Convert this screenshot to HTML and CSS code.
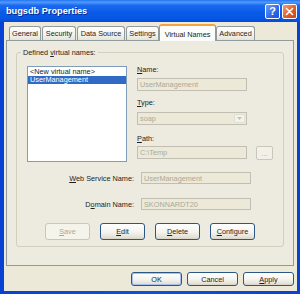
FILE: index.html
```html
<!DOCTYPE html>
<html lang="en">
<head>
    <meta charset="UTF-8">
    <title>bugsdb Properties</title>
    <link rel="stylesheet" href="styles.css">
</head>
<body>
    <div class="window">
        <!-- Title bar -->
        <div class="titlebar">
            <span class="title">bugsdb Properties</span>
            <div class="caption-buttons">
                <span class="cap-btn help">?</span>
                <span class="cap-btn close">
                    <svg width="9" height="9" viewBox="0 0 9 9">
                        <path d="M1.5 1.5 L7.5 7.5 M7.5 1.5 L1.5 7.5" stroke="#fff" stroke-width="1.6" stroke-linecap="round"/>
                    </svg>
                </span>
            </div>
        </div>

        <div class="client">
            <!-- Tabs -->
            <div class="tabs">
                <div class="tab tab-general">General</div>
                <div class="tab tab-security">Security</div>
                <div class="tab tab-source">Data Source</div>
                <div class="tab tab-settings">Settings</div>
                <div class="tab tab-virtual active">Virtual Names</div>
                <div class="tab tab-advanced">Advanced</div>
            </div>

            <div class="panel">
                <fieldset class="group">
                    <legend>Defined <u>v</u>irtual names:</legend>

                    <div class="group-top">
                        <div class="listbox">
                            <div class="list-item">&lt;New virtual name&gt;</div>
                            <div class="list-item selected">UserManagement</div>
                        </div>

                        <div class="fields">
                            <div class="field-label"><u>N</u>ame:</div>
                            <div class="textbox wide">UserManagement</div>

                            <div class="field-label type-label"><u>T</u>ype:</div>
                            <div class="combo">
                                <span class="combo-text">soap</span>
                                <span class="combo-arrow">
                                    <svg width="5" height="3" viewBox="0 0 5 3"><path d="M0 0 L5 0 L2.5 3 Z" fill="#C4C2B6"/></svg>
                                </span>
                            </div>

                            <div class="field-label path-label"><u>P</u>ath:</div>
                            <div class="path-row">
                                <div class="textbox wide">C:\Temp</div>
                                <div class="btn browse">...</div>
                            </div>
                        </div>
                    </div>

                    <div class="row web-row">
                        <div class="row-label"><u>W</u>eb Service Name:</div>
                        <div class="textbox short">UserManagement</div>
                    </div>
                    <div class="row domain-row">
                        <div class="row-label">D<u>o</u>main Name:</div>
                        <div class="textbox short">SKONNARDT20</div>
                    </div>

                    <div class="actions">
                        <div class="btn action disabled"><u>S</u>ave</div>
                        <div class="btn action"><u>E</u>dit</div>
                        <div class="btn action"><u>D</u>elete</div>
                        <div class="btn action"><u>C</u>onfigure</div>
                    </div>
                </fieldset>
            </div>

            <!-- Dialog buttons -->
            <div class="dialog-buttons">
                <div class="btn dialog default">OK</div>
                <div class="btn dialog">Cancel</div>
                <div class="btn dialog"><u>A</u>pply</div>
            </div>
        </div>
    </div>
</body>
</html>
```

FILE: styles.css
```css
/* General */
body {
    margin: 0;
    font-family: "Liberation Sans", Arial, sans-serif;
    font-size: 7.3px;
    color: #1E1E1E;
}

u {
    text-underline-offset: 1px;
}

.window {
    width: 300px;
    height: 294px;
    display: flex;
    flex-direction: column;
    background: linear-gradient(to right, #0842D4, #0A52E0 50%, #0842D4);
}

/* Title bar */
.titlebar {
    height: 22px;
    display: flex;
    align-items: center;
    padding: 0 3px 0 6px;
    background: linear-gradient(#2474F2 0%, #4F9AFB 10%, #1B69F0 25%, #0A5CE8 55%, #0656E4 85%, #044AD6 100%);
}

.title {
    flex: 1;
    color: #fff;
    font-weight: bold;
    font-size: 9.2px;
    text-shadow: 1px 1px 0 #0A2A90;
}

.caption-buttons {
    display: flex;
    gap: 2px;
}

.cap-btn {
    width: 15px;
    height: 15px;
    box-sizing: border-box;
    border: 1px solid #fff;
    border-radius: 2px;
    display: flex;
    align-items: center;
    justify-content: center;
    color: #fff;
}

.help {
    background: linear-gradient(135deg, #6E9CF7, #2F67E8 60%, #1F52D0);
    font-weight: bold;
    font-size: 11px;
}

.close {
    background: linear-gradient(135deg, #F0A27A, #E1602C 55%, #C8431A);
}

/* Client area */
.client {
    flex: 1;
    margin: 0 3px 3px 4px;
    padding-top: 2px;
    background: #ECE9D8;
    display: flex;
    flex-direction: column;
}

/* Tabs */
.tabs {
    height: 17px;
    display: flex;
    align-items: flex-end;
    margin: 0 0 -1px 5px;
}

.tab {
    height: 14px;
    box-sizing: border-box;
    margin-bottom: 1px;
    margin-right: 1px;
    border: 1px solid #919B9C;
    border-bottom: none;
    border-radius: 3px 3px 0 0;
    background: linear-gradient(#FFFFFF, #F3F2EC 60%, #E6E4D9);
    display: flex;
    align-items: center;
    justify-content: center;
    white-space: nowrap;
}

.tab-general { width: 32px; }
.tab-security { width: 34px; }
.tab-source { width: 48px; }
.tab-settings { width: 33px; margin-right: 0; }
.tab-virtual { width: 57px; margin-right: 0; }
.tab-advanced { width: 39px; }

.tab.active {
    position: relative;
    z-index: 1;
    height: 17px;
    margin-bottom: 0;
    border-top: 2px solid #F5A23C;
    background: #FCFCFA;
    padding-top: 1px;
}

.panel {
    height: 226px;
    box-sizing: border-box;
    margin: 0 3px 0 2px;
    border: 1px solid #919B9C;
    background: #EDEAE0;
    padding-top: 7px;
}

/* Group box */
.group {
    margin: 0 9px;
    padding: 9px 10px 6px 10px;
    border: 1px solid #D0D0BF;
    border-radius: 3px;
    min-width: 0;
}

.group legend {
    margin-left: -6px;
    padding: 0 2px;
    line-height: 9px;
}

.group-top {
    display: flex;
    align-items: flex-start;
}

.listbox {
    width: 104px;
    height: 96px;
    box-sizing: border-box;
    border: 1px solid #7F9DB9;
    background: #fff;
    padding-top: 1px;
    margin-right: 10px;
}

.list-item {
    height: 8px;
    line-height: 8px;
    padding-left: 2px;
    white-space: nowrap;
}

.list-item.selected {
    background: #316AC5;
    color: #fff;
}

.fields {
    margin-top: -1px;
    display: flex;
    flex-direction: column;
}

.field-label {
    line-height: 9px;
    margin-bottom: 4px;
}

.type-label {
    margin-top: 7px;
    margin-bottom: 5px;
}

.path-label {
    margin-top: 9px;
    margin-bottom: 3px;
}

/* Inputs */
.textbox {
    box-sizing: border-box;
    border: 1px solid #C2BFB2;
    background: #ECE9D8;
    color: #ACA899;
    padding-left: 2px;
    display: flex;
    align-items: center;
    white-space: nowrap;
}

.textbox.wide {
    width: 110px;
    height: 13px;
}

.textbox.short {
    width: 110px;
    height: 12px;
}

.combo {
    width: 110px;
    height: 13px;
    box-sizing: border-box;
    border: 1px solid #C2BFB2;
    background: #ECE9D8;
    color: #ACA899;
    display: flex;
    align-items: center;
    padding: 1px;
}

.combo-text {
    flex: 1;
    padding-left: 1px;
}

.combo-arrow {
    width: 11px;
    height: 100%;
    box-sizing: border-box;
    border: 1px solid #E1DFD4;
    border-radius: 1px;
    background: #F3F2EB;
    display: flex;
    align-items: center;
    justify-content: center;
}

.path-row {
    display: flex;
    align-items: flex-start;
    gap: 9px;
}

/* Rows under the list */
.row {
    display: grid;
    grid-template-columns: 107px 110px;
    column-gap: 7px;
    align-items: center;
}

.row-label {
    text-align: right;
    white-space: nowrap;
}

.web-row {
    margin-top: 10px;
}

.domain-row {
    margin-top: 14px;
}

/* Buttons */
.btn {
    box-sizing: border-box;
    border: 1px solid #2A5786;
    border-radius: 3px;
    background: linear-gradient(#FFFFFF, #F4F3EE 55%, #E3DFD4 90%, #D6D0C5);
    display: flex;
    align-items: center;
    justify-content: center;
    white-space: nowrap;
}

.browse {
    width: 17px;
    height: 14px;
    border-color: #C9C7BA;
    color: #ACA899;
    background: #F2F1E9;
    border-radius: 2px;
}

.actions {
    margin-top: 13px;
    display: flex;
    justify-content: center;
    gap: 10px;
}

.action {
    width: 45px;
    height: 17px;
}

.btn.disabled {
    border-color: #C9C7BA;
    background: #F5F4EA;
    color: #ACA899;
}

.dialog-buttons {
    margin: 6px 3px 0 0;
    display: flex;
    justify-content: flex-end;
    gap: 5px;
}

.dialog {
    width: 51px;
    height: 14px;
}

.dialog.default {
    box-shadow: inset 0 0 0 1px #A9C1EE;
}
```
